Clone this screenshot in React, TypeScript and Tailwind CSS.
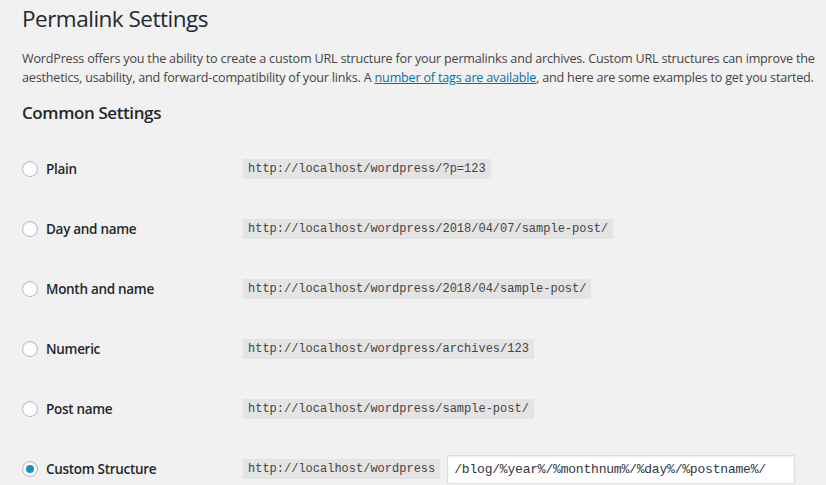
import React from 'react';

const options = [
  { label: 'Plain', url: 'http://localhost/wordpress/?p=123' },
  { label: 'Day and name', url: 'http://localhost/wordpress/2018/04/07/sample-post/' },
  { label: 'Month and name', url: 'http://localhost/wordpress/2018/04/sample-post/' },
  { label: 'Numeric', url: 'http://localhost/wordpress/archives/123' },
  { label: 'Post name', url: 'http://localhost/wordpress/sample-post/' },
];

const Radio: React.FC<{ checked?: boolean }> = ({ checked }) => (
  <span className="w-4 h-4 rounded-full border border-[#b4b9be] bg-white flex items-center justify-center shrink-0 shadow-[inset_0_1px_2px_rgba(0,0,0,0.07)]">
    {checked && <span className="w-2 h-2 rounded-full bg-[#1e8cbe]" />}
  </span>
);

const Code: React.FC<{ children: React.ReactNode }> = ({ children }) => (
  <code className="bg-[#e4e4e4] px-[5px] h-5 flex items-center text-[12px] text-[#444] font-['Liberation_Mono',monospace]">
    {children}
  </code>
);

export default function App() {
  return (
    <div className="w-[826px] h-[485px] overflow-hidden bg-[#f1f1f1] text-[#444] font-['Open_Sans',sans-serif] pl-[22px]">
      <h1 className="text-[22.5px] font-normal text-[#23282d] leading-[29px] pt-[4px] tracking-[-0.5px]">
        Permalink Settings
      </h1>
      <p className="text-[12.6px] leading-[19px] mt-[16px] pr-1 tracking-[-0.2px]">
        WordPress offers you the ability to create a custom URL structure for your permalinks and archives. Custom URL structures can improve the aesthetics, usability, and forward-compatibility of your links. A{' '}
        <a className="text-[#0073aa] underline">number of tags are available</a>, and here are some examples to get you started.
      </p>
      <h2 className="text-[17px] font-semibold text-[#23282d] leading-[24px] mt-[14px] tracking-[-0.4px]">
        Common Settings
      </h2>
      <div className="flex flex-col mt-[14px]">
        {options.map((o) => (
          <div key={o.label} className="flex items-center h-[60px]">
            <div className="w-[221px] flex items-center gap-2">
              <Radio />
              <span className="text-[13.5px] font-semibold text-[#23282d] tracking-[-0.3px]">{o.label}</span>
            </div>
            <Code>{o.url}</Code>
          </div>
        ))}
        <div className="flex items-center h-[60px]">
          <div className="w-[221px] flex items-center gap-2">
            <Radio checked />
            <span className="text-[13.5px] font-semibold text-[#23282d] tracking-[-0.3px]">Custom Structure</span>
          </div>
          <Code>http://localhost/wordpress</Code>
          <input
            readOnly
            value="/blog/%year%/%monthnum%/%day%/%postname%/"
            className="ml-[7px] w-[348px] h-[29px] bg-white border border-[#ddd] shadow-[inset_0_1px_2px_rgba(0,0,0,0.07)] px-[6px] text-[13px] text-[#32373c] font-['Liberation_Mono',monospace] tracking-[-0.2px] outline-none"
          />
        </div>
      </div>
    </div>
  );
}
